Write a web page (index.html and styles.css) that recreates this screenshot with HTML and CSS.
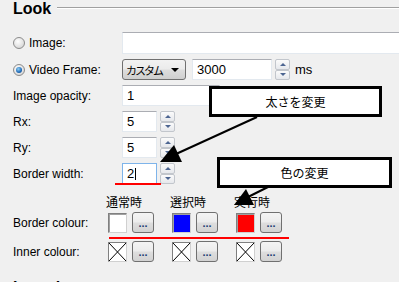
FILE: index.html
```html
<!DOCTYPE html>
<html>
<head>
    <meta charset="UTF-8">
    <title>Button properties</title>
    <link rel="stylesheet" href="styles.css">
</head>
<body>
<div class="page">
    <div class="section-title"><span>Look</span><div class="title-rule"></div></div>

    <div class="form-row image-row">
        <div class="row-label"><span class="radio"></span>Image:</div>
        <div class="field image-field"></div>
    </div>

    <div class="form-row video-row">
        <div class="row-label"><span class="radio checked"></span>Video Frame:</div>
        <div class="combo"><span class="combo-text">カスタム</span><span class="combo-arrow"></span></div>
        <div class="field frame-field">3000</div>
        <div class="spinner"><span class="spin up"></span><span class="spin down"></span></div>
        <span class="unit">ms</span>
    </div>

    <div class="form-row">
        <div class="row-label">Image opacity:</div>
        <div class="field opacity-field">1</div>
    </div>

    <div class="form-row">
        <div class="row-label">Rx:</div>
        <div class="field small-field">5</div>
        <div class="spinner"><span class="spin up"></span><span class="spin down"></span></div>
    </div>

    <div class="form-row">
        <div class="row-label">Ry:</div>
        <div class="field small-field">5</div>
        <div class="spinner"><span class="spin up"></span><span class="spin down"></span></div>
    </div>

    <div class="form-row">
        <div class="row-label">Border width:</div>
        <div class="field small-field focused">2<span class="caret"></span></div>
        <div class="spinner"><span class="spin up"></span><span class="spin down"></span></div>
    </div>

    <div class="colour-head">
        <span>通常時</span>
        <span>選択時</span>
        <span>実行時</span>
    </div>

    <div class="colour-row">
        <div class="colour-label">Border colour:</div>
        <div class="colour-cell"><span class="swatch" style="background: #ffffff"></span><span class="ellipsis">...</span></div>
        <div class="colour-cell"><span class="swatch" style="background: #0000ff"></span><span class="ellipsis">...</span></div>
        <div class="colour-cell"><span class="swatch" style="background: #ff0000"></span><span class="ellipsis">...</span></div>
    </div>

    <div class="colour-row inner-row">
        <div class="colour-label">Inner colour:</div>
        <div class="colour-cell">
            <span class="swatch none"><svg width="17" height="18" viewBox="0 0 17 18"><path d="M0 0L17 18M17 0L0 18" stroke="#000" stroke-width="1" fill="none"/></svg></span>
            <span class="ellipsis">...</span>
        </div>
        <div class="colour-cell">
            <span class="swatch none"><svg width="17" height="18" viewBox="0 0 17 18"><path d="M0 0L17 18M17 0L0 18" stroke="#000" stroke-width="1" fill="none"/></svg></span>
            <span class="ellipsis">...</span>
        </div>
        <div class="colour-cell">
            <span class="swatch none"><svg width="17" height="18" viewBox="0 0 17 18"><path d="M0 0L17 18M17 0L0 18" stroke="#000" stroke-width="1" fill="none"/></svg></span>
            <span class="ellipsis">...</span>
        </div>
    </div>

    <div class="section-title next-title"><span>Location</span><div class="title-rule"></div></div>

    <!-- annotations drawn over the dialog -->
    <svg class="marks" width="399" height="282" viewBox="0 0 399 282">
        <line x1="115" y1="184" x2="161" y2="184" stroke="#ff0000" stroke-width="2"/>
        <line x1="109" y1="238" x2="289" y2="238" stroke="#ff0000" stroke-width="2"/>
        <line x1="257" y1="117" x2="176" y2="154" stroke="#000" stroke-width="2"/>
        <polygon points="160,162 174,145 182,162" fill="#000"/>
        <line x1="268" y1="187" x2="248" y2="197" stroke="#000" stroke-width="2"/>
        <polygon points="234,205 246,189 254,205" fill="#000"/>
    </svg>
    <div class="callout callout-width">太さを変更</div>
    <div class="callout callout-colour">色の変更</div>
</div>
</body>
</html>
```

FILE: styles.css
```css
* {
    margin: 0;
    padding: 0;
    box-sizing: border-box;
}

body {
    background-color: #f0f0f0;
    font-family: "Liberation Sans", Arial, sans-serif;
    font-size: 12px;
    color: #000;
    overflow: hidden;
}

.page {
    position: relative;
    width: 399px;
    height: 282px;
    padding-left: 13px;
    overflow: hidden;
}

.section-title {
    display: flex;
    height: 18px;
}

.section-title span {
    font-size: 16px;
    font-weight: bold;
    line-height: 18px;
}

.title-rule {
    flex: 1;
    height: 2px;
    margin: 7px 0 0 6px;
    border-top: 1px solid #a0a0a0;
    border-bottom: 1px solid #ffffff;
}

.next-title {
    margin-top: 17px;
}

.form-row {
    display: flex;
    align-items: center;
    height: 21px;
    margin-top: 5px;
}

.image-row {
    margin-top: 14px;
}

.video-row {
    margin-top: 6px;
}

.row-label {
    display: flex;
    align-items: center;
    width: 109px;
    flex-shrink: 0;
    line-height: 14px;
}

.radio {
    width: 12px;
    height: 12px;
    margin-right: 4px;
    border: 1px solid #8b8b8b;
    border-radius: 50%;
    background: radial-gradient(circle at 40% 35%, #ffffff, #dcdcdc 70%, #cfcfcf);
    display: flex;
    align-items: center;
    justify-content: center;
}

.radio.checked::after {
    content: "";
    width: 6px;
    height: 6px;
    border-radius: 50%;
    background: radial-gradient(circle at 40% 35%, #8fd0f5, #1f6ab8 60%, #163f7a);
}

.field {
    height: 21px;
    background: #ffffff;
    border: 1px solid #e3e9ef;
    border-top-color: #abadb3;
    padding-left: 4px;
    font-size: 13px;
    line-height: 19px;
    flex-shrink: 0;
}

.image-field {
    width: 290px;
    height: 22px;
}

.frame-field {
    width: 80px;
    margin-left: 6px;
}

.opacity-field {
    width: 98px;
}

.small-field {
    width: 35px;
}

.focused {
    border-color: #7eb4ea;
    display: flex;
    align-items: center;
}

.caret {
    width: 1px;
    height: 12px;
    background: #000;
    margin-left: 1px;
}

.combo {
    width: 64px;
    height: 21px;
    display: flex;
    align-items: center;
    padding-left: 3px;
    border: 1px solid #707070;
    border-radius: 3px;
    background: linear-gradient(#f2f2f2, #ebebeb 48%, #dddddd 52%, #cfcfcf);
    flex-shrink: 0;
}

.combo-text {
    font-family: "Noto Sans CJK JP", sans-serif;
    font-size: 11px;
    letter-spacing: -2px;
    line-height: 14px;
    white-space: nowrap;
}

.combo-arrow {
    margin-left: auto;
    margin-right: 6px;
    border-left: 4px solid transparent;
    border-right: 4px solid transparent;
    border-top: 4px solid #000;
}

.spinner {
    display: flex;
    flex-direction: column;
    width: 15px;
    height: 21px;
    margin-left: 3px;
    flex-shrink: 0;
}

.spin {
    flex: 1;
    display: flex;
    align-items: center;
    justify-content: center;
    border: 1px solid #c2c6cc;
    border-radius: 2px;
    background: linear-gradient(#fbfbfb, #e6e8ec);
}

.spin::after {
    content: "";
    border-left: 3px solid transparent;
    border-right: 3px solid transparent;
}

.up::after {
    border-bottom: 3px solid #4c6591;
}

.down::after {
    border-top: 3px solid #4c6591;
}

.unit {
    margin-left: 5px;
    font-size: 13px;
}

.colour-head {
    display: flex;
    margin: 10px 0 0 93px;
    height: 16px;
    font-family: "Noto Sans CJK JP", sans-serif;
    font-size: 12px;
    line-height: 16px;
}

.colour-head span {
    width: 64px;
}

.colour-row {
    display: flex;
    align-items: center;
    gap: 18px;
    height: 21px;
    margin-top: 2px;
}

.inner-row {
    margin-top: 8px;
}

.colour-label {
    width: 77px;
    line-height: 14px;
}

.colour-cell {
    display: flex;
    align-items: center;
    gap: 5px;
}

.swatch {
    width: 19px;
    height: 20px;
    border: 1px solid;
    border-color: #808080 #d0d0d0 #d0d0d0 #808080;
    box-shadow: inset 1px 1px 0 #a0a0a0;
    display: block;
}

.swatch.none {
    background: #ffffff;
    box-shadow: none;
}

.swatch svg {
    display: block;
}

.ellipsis {
    width: 22px;
    height: 21px;
    display: flex;
    align-items: flex-end;
    justify-content: center;
    padding-bottom: 4px;
    border: 1px solid #707070;
    border-radius: 3px;
    background: linear-gradient(#f4f4f4, #ececec 48%, #dedede 52%, #d2d2d2);
    color: #1d3d73;
    font-size: 11px;
    font-weight: bold;
    line-height: 10px;
}

.marks {
    position: absolute;
    left: 0;
    top: 0;
}

.callout {
    position: absolute;
    height: 31px;
    border: 3px solid #000;
    background: #ffffff;
    display: flex;
    align-items: center;
    justify-content: center;
    font-family: "Noto Sans CJK JP", sans-serif;
    font-size: 12px;
}

.callout-width {
    left: 209px;
    top: 86px;
    width: 173px;
}

.callout-colour {
    left: 217px;
    top: 157px;
    width: 175px;
}
```
